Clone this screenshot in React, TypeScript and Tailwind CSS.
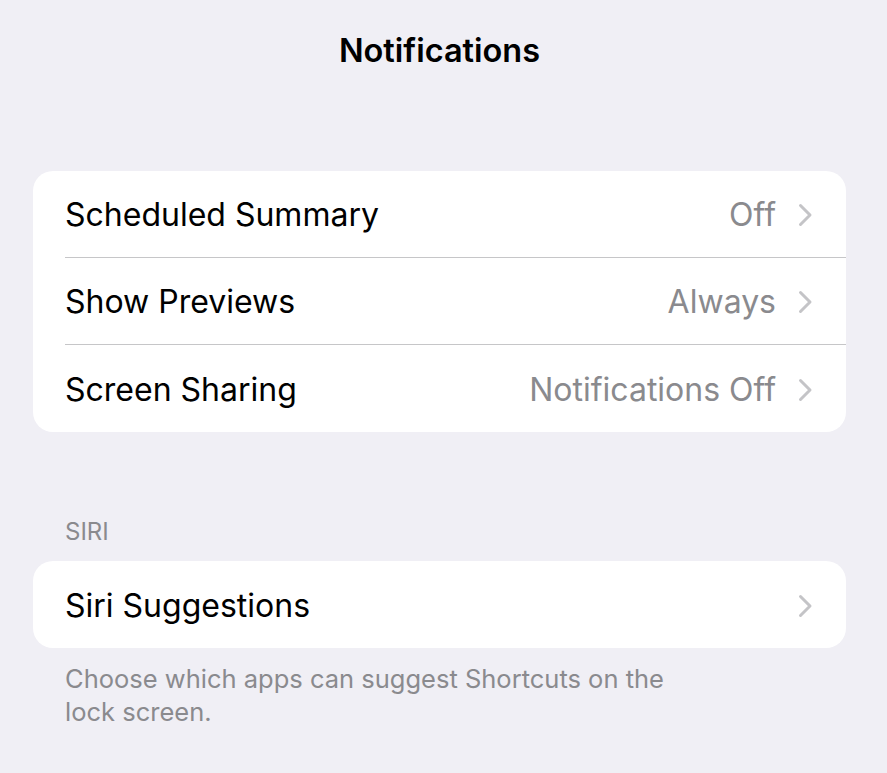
interface Row {
  label: string;
  value?: string;
}

const notificationRows: Row[] = [
  { label: "Scheduled Summary", value: "Off" },
  { label: "Show Previews", value: "Always" },
  { label: "Screen Sharing", value: "Notifications Off" },
];

function Chevron() {
  return (
    <svg
      width="15"
      height="24"
      viewBox="0 0 15 24"
      fill="none"
      className="shrink-0 text-[#c4c4c7]"
    >
      <path
        d="M2.5 2.5 12 12 2.5 21.5"
        stroke="currentColor"
        strokeWidth="3"
        strokeLinecap="round"
        strokeLinejoin="round"
      />
    </svg>
  );
}

function SettingsRow({ row, last }: { row: Row; last: boolean }) {
  return (
    <div className="flex h-[87px] items-stretch pl-[32px]">
      <div
        className={`flex flex-1 items-center pr-[33px] pt-[2px] ${
          last ? "" : "border-b border-[#c6c6c8]"
        }`}
      >
        <span className="flex-1 text-[32px] text-black">{row.label}</span>
        {row.value ? (
          <span className="mr-[22px] text-[32px] text-[#8a8a8e]">
            {row.value}
          </span>
        ) : null}
        <Chevron />
      </div>
    </div>
  );
}

export default function App() {
  return (
    <div
      className="h-[773px] w-full bg-[#f0eff5] pl-[33px] pr-[41px]"
      style={{ fontFamily: "Inter, 'Noto Sans', sans-serif" }}
    >
      <h1 className="pt-[31px] text-center text-[32.5px] font-semibold leading-[40px] text-black">
        Notifications
      </h1>

      <div className="mt-[100px] overflow-hidden rounded-[20px] bg-white">
        {notificationRows.map((row, i) => (
          <SettingsRow
            key={row.label}
            row={row}
            last={i === notificationRows.length - 1}
          />
        ))}
      </div>

      <p className="mt-[86px] pl-[32px] text-[24px] leading-[28px] text-[#8a8a8e]">
        SIRI
      </p>
      <div className="mt-[15px] overflow-hidden rounded-[20px] bg-white">
        <SettingsRow row={{ label: "Siri Suggestions" }} last />
      </div>
      <p className="mt-[14px] w-[660px] pl-[32px] text-[25.5px] leading-[33px] text-[#8a8a8e]">
        Choose which apps can suggest Shortcuts on the lock screen.
      </p>
    </div>
  );
}
